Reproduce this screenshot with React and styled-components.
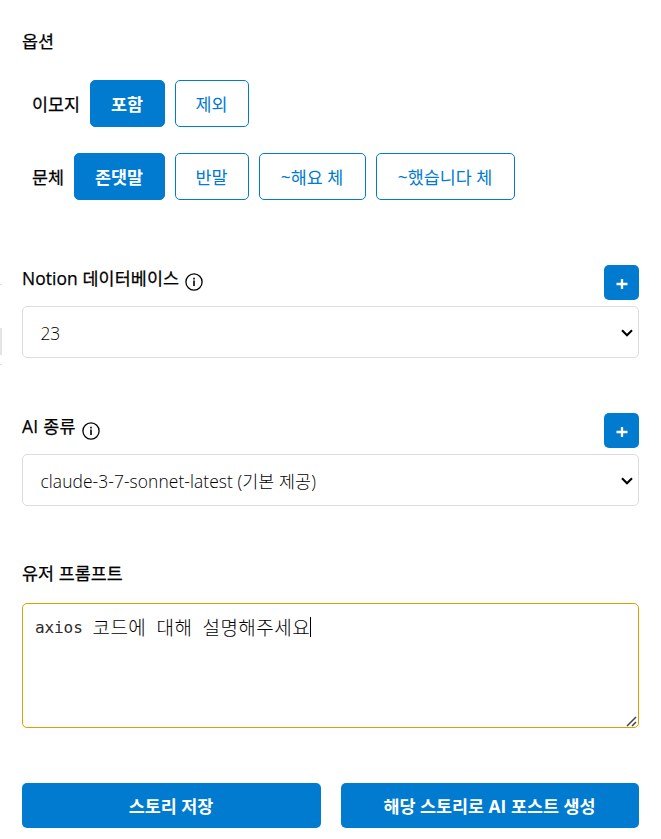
import React from "react";
import styled, { createGlobalStyle } from "styled-components";

const BLUE = "#007bd0";
const SANS = '"Open Sans", "Noto Sans CJK KR", sans-serif';

const GlobalStyle = createGlobalStyle`
  * { box-sizing: border-box; }
  body { margin: 0; background: #fff; color: #000; font-family: ${SANS}; }
`;

const Page = styled.div`
  display: flex;
  width: 661px;
  height: 839px;
  overflow: hidden;
`;
const Edge = styled.div`
  width: 2px;
  height: 81px;
  margin-top: 284px;
  border-top: 1px solid #dcdcdc;
  border-bottom: 1px solid #dcdcdc;
`;
const EdgeThumb = styled.div`
  width: 2px;
  height: 27px;
  margin-top: 43px;
  background: #e4e4e4;
`;
const Form = styled.main`
  display: flex;
  flex-direction: column;
  width: 617px;
  margin-left: 20px;
`;
const Title = styled.h2`
  margin: 0;
  font: 400 17.4px/24px ${SANS};
  -webkit-text-stroke: 0.25px #000;
  letter-spacing: ${(p) => p.$spacing || "0.05px"};
  white-space: nowrap;
`;
const Options = styled.section`
  padding-top: 29px;
  height: 265px;
`;
const OptionRow = styled.div`
  display: flex;
  align-items: center;
  gap: 10px;
  height: 47px;
  margin: 27px 0 0 10px;
  & + & { margin-top: 26px; }
`;
const OptionLabel = styled.span`
  width: ${(p) => p.$w}px;
  font: 400 17.4px/24px ${SANS};
  -webkit-text-stroke: 0.25px #000;
  white-space: nowrap;
`;
const Choice = styled.button`
  width: ${(p) => p.$w}px;
  height: 47px;
  padding: 0 1px 0 0;
  border: 1px solid ${BLUE};
  border-radius: 5px;
  background: ${(p) => (p.$active ? BLUE : "#fff")};
  color: ${(p) => (p.$active ? "#fff" : BLUE)};
  font: ${(p) => (p.$active ? 700 : 400)} 17.4px/24px ${SANS};
  white-space: nowrap;
`;
const Field = styled.section`
  height: 148px;
`;
const FieldHead = styled.div`
  display: flex;
  justify-content: space-between;
  height: 35px;
  margin-bottom: 6px;
`;
const TitleGroup = styled.div`
  display: flex;
  gap: 6px;
  padding-top: 1px;
`;
const InfoIcon = styled.svg`
  width: 18px;
  height: 18px;
  margin-top: ${(p) => p.$top}px;
`;
const AddButton = styled.button`
  display: flex;
  align-items: center;
  justify-content: center;
  width: 35px;
  height: 35px;
  padding: 3px 0 0;
  border: 0;
  border-radius: 5px;
  background: ${BLUE};
`;
const SelectBox = styled.div`
  display: flex;
  align-items: center;
  justify-content: space-between;
  height: 52px;
  padding: 1px 5px 0 17.5px;
  border: 1px solid #dcdcdc;
  border-radius: 5px;
  font: 300 17.4px/24px ${SANS};
  letter-spacing: ${(p) => p.$spacing || "0"};
`;
const Chevron = styled.svg`
  width: 12px;
  height: 8px;
`;
const Prompt = styled.section`
  height: 222px;
`;
const PromptBox = styled.div`
  display: flex;
  justify-content: space-between;
  height: 125px;
  margin-top: 18px;
  padding: 11px 0 0 12px;
  border: 1px solid #e69b00;
  border-radius: 5px;
  font: 300 16.5px/24px "Noto Sans CJK KR", sans-serif;
`;
const PromptLine = styled.div`
  display: flex;
  height: 24px;
  white-space: pre;
`;
const Latin = styled.span`
  width: 57.5px;
  color: #2c2c2c;
  font: 400 16px/26px "DejaVu Sans Mono", monospace;
  letter-spacing: -0.1px;
`;
const Word = styled.span`
  width: ${(p) => p.$w}px;
  font-size: 19px;
  letter-spacing: 0.45px;
`;
const Caret = styled.i`
  width: 1px;
  height: 20px;
  margin: 2px 0 0 -1px;
  background: #000;
`;
const Grip = styled.svg`
  align-self: flex-end;
  width: 12px;
  height: 12px;
`;
const Actions = styled.div`
  display: grid;
  grid-template-columns: 299px 298px;
  gap: 20px;
`;
const ActionButton = styled.button`
  height: 45px;
  padding: 1px 1px 0 0;
  border: 0;
  border-radius: 5px;
  background: ${BLUE};
  color: #fff;
  font: 700 17.4px/24px ${SANS};
`;

const Info = ({ top }) => (
  <InfoIcon $top={top} viewBox="0 0 18 18" fill="none">
    <circle cx="9" cy="9" r="8.1" stroke="#000" strokeWidth="1.3" />
    <path d="M9 4.8V6.4M9 7.5V13" stroke="#000" strokeWidth="1.6" />
  </InfoIcon>
);

const SelectField = ({ title, value, titleSpacing, valueSpacing, iconTop = 7 }) => (
  <Field>
    <FieldHead>
      <TitleGroup>
        <Title $spacing={titleSpacing}>{title}</Title>
        <Info top={iconTop} />
      </TitleGroup>
      <AddButton aria-label="추가">
        <svg width="12" height="12" viewBox="0 0 12 12">
          <path d="M6 1V11M0.5 6H11.5" stroke="#fff" strokeWidth="2.3" />
        </svg>
      </AddButton>
    </FieldHead>
    <SelectBox $spacing={valueSpacing}>
      {value}
      <Chevron viewBox="0 0 12 8">
        <path d="M1 1.3L6 6.3L11 1.3" fill="none" stroke="#000" strokeWidth="2.1" />
      </Chevron>
    </SelectBox>
  </Field>
);

export default function App() {
  return (
    <Page>
      <GlobalStyle />
      <Edge><EdgeThumb /></Edge>
      <Form>
        <Options>
          <Title>옵션</Title>
          <OptionRow>
            <OptionLabel $w={48}>이모지</OptionLabel>
            <Choice $active $w={75}>포함</Choice>
            <Choice $w={74}>제외</Choice>
          </OptionRow>
          <OptionRow>
            <OptionLabel $w={32}>문체</OptionLabel>
            <Choice $active $w={91}>존댓말</Choice>
            <Choice $w={74}>반말</Choice>
            <Choice $w={107}>~해요 체</Choice>
            <Choice $w={139}>~했습니다 체</Choice>
          </OptionRow>
        </Options>
        <SelectField title="Notion 데이터베이스" titleSpacing="0.1px" value="23" valueSpacing="-0.3px" />
        <SelectField
          title="AI 종류"
          titleSpacing="0.3px"
          iconTop={8}
          value="claude-3-7-sonnet-latest (기본 제공)"
          valueSpacing="0.08px"
        />
        <Prompt>
          <Title>유저 프롬프트</Title>
          <PromptBox>
            <PromptLine>
              <Latin>axios</Latin>
              <Word $w={64}>코드에</Word>
              <Word $w={46}>대해</Word>
              <Word $w={108}>설명해주세요</Word>
              <Caret />
            </PromptLine>
            <Grip viewBox="0 0 12 12">
              <path d="M1 11L10 2M6 11L10 7" stroke="#444" strokeWidth="1.5" />
            </Grip>
          </PromptBox>
        </Prompt>
        <Actions>
          <ActionButton>스토리 저장</ActionButton>
          <ActionButton>해당 스토리로 AI 포스트 생성</ActionButton>
        </Actions>
      </Form>
    </Page>
  );
}
